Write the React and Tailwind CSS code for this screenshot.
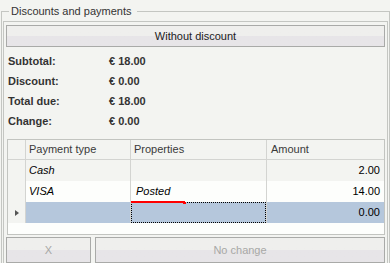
import React from "react";

const payments = [
  { type: "Cash", props: "", amount: "2.00", bg: "bg-[#f3f4f1]" },
  { type: "VISA", props: "Posted", amount: "14.00", bg: "bg-[#fdfefc]", editing: true },
];

const totals = [
  { label: "Subtotal:", value: "€ 18.00" },
  { label: "Discount:", value: "€ 0.00" },
  { label: "Total due:", value: "€ 18.00" },
  { label: "Change:", value: "€ 0.00" },
];

const btn =
  "border border-[#a9aaa8] bg-gradient-to-b from-[#efefed] from-50% to-[#e7e5e8] to-50% flex items-center justify-center";

const App = () => {
  return (
    <div
      className="w-[390px] h-[263px] overflow-hidden bg-[#f3f4f1] text-[11px] text-[#333]"
      style={{ fontFamily: '"Liberation Sans", Arial, sans-serif' }}
    >
      {/* Group box */}
      <div className="relative ml-[1px] mt-[11px] w-[389px] h-[270px] border border-[#c4c6c2]">
        <span className="absolute left-[7px] top-[-8px] pl-[2px] pr-[6px] bg-[#f3f4f1] leading-[14px] text-[#333]">
          Discounts and payments
        </span>

        {/* Inner panel */}
        <div className="ml-[1px] mt-[9px] w-[385px] h-[260px] border border-[#c4c6c2] px-[2px] pt-[3px]">
          <button className={`${btn} w-full h-[22px] text-[#222]`}>Without discount</button>

          <div className="mt-[4px] pl-[2px]">
            {totals.map((t) => (
              <div key={t.label} className="flex items-center h-[20px] font-bold text-[#333]">
                <span className="w-[101px]">{t.label}</span>
                <span>{t.value}</span>
              </div>
            ))}
          </div>

          {/* Payments grid */}
          <div className="mt-[8px] ml-[1px] h-[96px] border border-[#c2c4c0] bg-[#fdfefc] flex flex-col">
            <div className="grid grid-cols-[18px_105px_136px_1fr] h-[20px] border-b border-[#d3d4d1] bg-[#f3f4f1] text-[#3a3a3a]">
              <div className="border-r border-[#d3d4d1]" />
              <div className="border-r border-[#d3d4d1] pl-[3px] flex items-center">Payment type</div>
              <div className="border-r border-[#d3d4d1] pl-[3px] flex items-center">Properties</div>
              <div className="pl-[4px] flex items-center">Amount</div>
            </div>

            {payments.map((p) => (
              <div key={p.type} className={`grid grid-cols-[18px_105px_136px_1fr] h-[21px] ${p.bg} text-black`}>
                <div className="border-r border-[#d3d4d1] bg-[#f3f4f1]" />
                <div className="border-r border-[#d3d4d1] pl-[3px] flex items-center italic">{p.type}</div>
                <div className="relative border-r border-[#d3d4d1] pl-[5px] flex items-center italic">
                  {p.props}
                  {p.editing && (
                    <>
                      <div className="absolute z-10 left-0 top-[20px] w-[54px] h-[2px] bg-[#ff0000]" />
                      <div className="absolute z-10 left-[52px] top-[21px] w-[3px] h-[2px] bg-[#ff0000]" />
                    </>
                  )}
                </div>
                <div className="pr-[4px] flex items-center justify-end">{p.amount}</div>
              </div>
            ))}

            {/* new row */}
            <div className="grid grid-cols-[18px_105px_136px_1fr] h-[21px] bg-[#b5c7dc] text-black">
              <div className="border-r border-[#d3d4d1] bg-[#f3f4f1] flex items-center justify-center">
                <span className="w-0 h-0 border-y-[3px] border-y-transparent border-l-[4px] border-l-[#555]" />
              </div>
              <div className="border-r border-[#d3d4d1]" />
              <div className="border-r border-[#d3d4d1]">
                <div className="w-full h-full border border-dotted border-black" />
              </div>
              <div className="pr-[4px] flex items-center justify-end">0.00</div>
            </div>
            <div className="flex-1" />
          </div>

          <div className="mt-[2px] flex gap-[4px]">
            <button className={`${btn} w-[85px] h-[26px] text-[#a7a8a6]`}>X</button>
            <button className={`${btn} flex-1 h-[26px] text-[#a7a8a6]`}>No change</button>
          </div>
        </div>
      </div>
    </div>
  );
};

export default App;
